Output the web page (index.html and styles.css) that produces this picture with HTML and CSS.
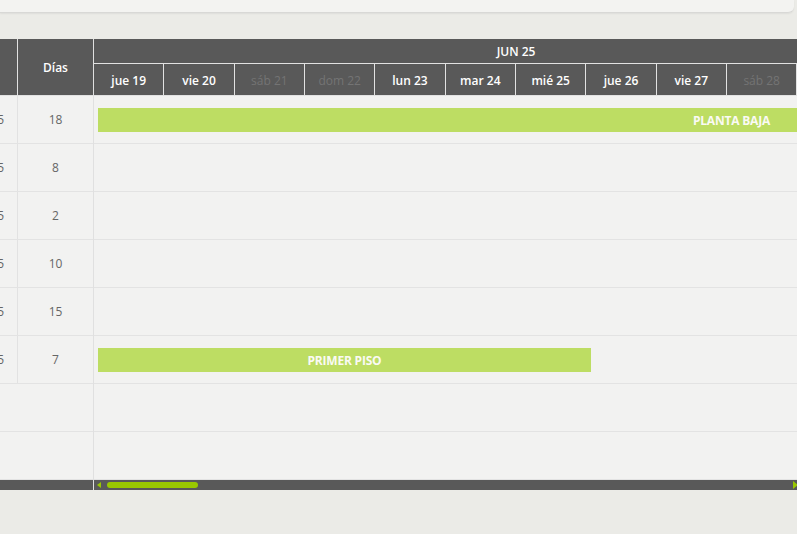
FILE: index.html
```html
<!DOCTYPE html>
<html lang="es">
<head>
<meta charset="utf-8">
<title>Gantt</title>
<link rel="stylesheet" href="styles.css">
</head>
<body>
<div class="topbar"></div>
<div class="gantt">
  <div class="left">
    <div class="lhead">
      <div class="ca hcell"></div>
      <div class="cb hcell">Días</div>
    </div>
    <div class="lrow"><div class="ca cell"><span>19/06/25</span></div><div class="cb cell">18</div></div>
    <div class="lrow"><div class="ca cell"><span>20/06/25</span></div><div class="cb cell">8</div></div>
    <div class="lrow"><div class="ca cell"><span>23/06/25</span></div><div class="cb cell">2</div></div>
    <div class="lrow"><div class="ca cell"><span>24/06/25</span></div><div class="cb cell">10</div></div>
    <div class="lrow"><div class="ca cell"><span>25/06/25</span></div><div class="cb cell">15</div></div>
    <div class="lrow"><div class="ca cell"><span>26/06/25</span></div><div class="cb cell">7</div></div>
    <div class="lrow empty"></div>
    <div class="lrow empty"></div>
    <div class="lscroll"></div>
  </div>
  <div class="right">
    <div class="timeline">
      <div class="month">JUN 25</div>
      <div class="days">
        <div class="day">jue 19</div>
        <div class="day">vie 20</div>
        <div class="day weekend">sáb 21</div>
        <div class="day weekend">dom 22</div>
        <div class="day">lun 23</div>
        <div class="day">mar 24</div>
        <div class="day">mié 25</div>
        <div class="day">jue 26</div>
        <div class="day">vie 27</div>
        <div class="day weekend">sáb 28</div>
        <div class="day weekend">dom 29</div>
        <div class="day">lun 30</div>
      </div>
      <div class="trow"><div class="bar" style="width:1267px">PLANTA BAJA</div></div>
      <div class="trow"></div>
      <div class="trow"></div>
      <div class="trow"></div>
      <div class="trow"></div>
      <div class="trow"><div class="bar" style="width:493px">PRIMER PISO</div></div>
      <div class="trow"></div>
      <div class="trow"></div>
    </div>
    <div class="hscroll">
      <span class="arrow left-arrow"></span>
      <span class="thumb"></span>
      <span class="arrow right-arrow"></span>
    </div>
  </div>
</div>
</body>
</html>
```

FILE: styles.css
```css
html, body {
  margin: 0;
  padding: 0;
}
body {
  background: #ebebe7;
  font-family: "Open Sans", "Liberation Sans", sans-serif;
  font-size: 12px;
  overflow: hidden;
  width: 797px;
  height: 534px;
}
.topbar {
  height: 12px;
  margin-right: 3px;
  background: #f3f3f1;
  border-bottom: 1px solid #d8d8d6;
  border-bottom-right-radius: 6px;
  box-shadow: 0 1px 2px rgba(0, 0, 0, 0.06);
}
.gantt {
  margin-top: 26px;
  display: flex;
  align-items: flex-start;
}
.left {
  flex: 0 0 93px;
  border-right: 1px solid #e0e0e0;
  background: #f2f2f1;
}
.lhead {
  display: flex;
  height: 56px;
  background: #595959;
  border-bottom: 1px solid #e2e2e2;
}
.hcell {
  color: #fff;
  font-weight: 600;
  display: flex;
  align-items: center;
  justify-content: center;
  padding-top: 1px;
}
.ca {
  width: 17px;
  border-right: 1px solid #e2e2e2;
  flex: 0 0 17px;
}
.cb {
  flex: 1;
}
.lrow {
  display: flex;
  height: 47px;
  border-bottom: 1px solid #e3e3e3;
}
.cell {
  color: #666;
  display: flex;
  align-items: center;
  justify-content: center;
  padding-bottom: 1px;
}
.ca.cell {
  justify-content: flex-end;
  overflow: hidden;
  white-space: nowrap;
  padding-right: 13px;
  flex-basis: 4px;
  width: 4px;
}
.lscroll {
  height: 10px;
  background: #595959;
}
.right {
  flex: 1;
  min-width: 0;
  overflow: hidden;
}
.timeline {
  width: 844px;
  background: #f2f2f1;
  overflow: hidden;
}
.month {
  height: 24px;
  background: #595959;
  color: #fff;
  font-weight: 600;
  display: flex;
  align-items: center;
  justify-content: center;
  border-bottom: 1px solid #e2e2e2;
}
.days {
  display: grid;
  grid-template-columns: repeat(12, 1fr);
  height: 31px;
  background: #595959;
  border-bottom: 1px solid #e2e2e2;
}
.day {
  color: #fff;
  font-weight: 600;
  display: flex;
  align-items: center;
  justify-content: center;
  border-right: 1px solid #e2e2e2;
  padding-top: 1px;
}
.day.weekend {
  color: #747474;
  font-weight: 400;
}
.trow {
  height: 47px;
  border-bottom: 1px solid #e3e3e3;
  display: flex;
  align-items: center;
  overflow: visible;
}
.bar {
  flex: 0 0 auto;
  margin-left: 4px;
  margin-top: 1px;
  height: 24px;
  background: #bddd63;
  color: #fafaf5;
  font-weight: 700;
  letter-spacing: -0.2px;
  display: flex;
  align-items: center;
  justify-content: center;
}
.hscroll {
  height: 10px;
  background: #595959;
  display: flex;
  align-items: center;
  position: relative;
}
.arrow {
  width: 0;
  height: 0;
  border-top: 3px solid transparent;
  border-bottom: 3px solid transparent;
}
.left-arrow {
  margin-left: 3px;
  border-right: 4px solid #99c800;
}
.thumb {
  margin-left: 6px;
  width: 91px;
  height: 6px;
  border-radius: 3px;
  background: #99c800;
}
.right-arrow {
  margin-left: auto;
  margin-right: -1px;
  border-left: 5px solid #99c800;
  border-top-width: 4px;
  border-bottom-width: 4px;
}
```
